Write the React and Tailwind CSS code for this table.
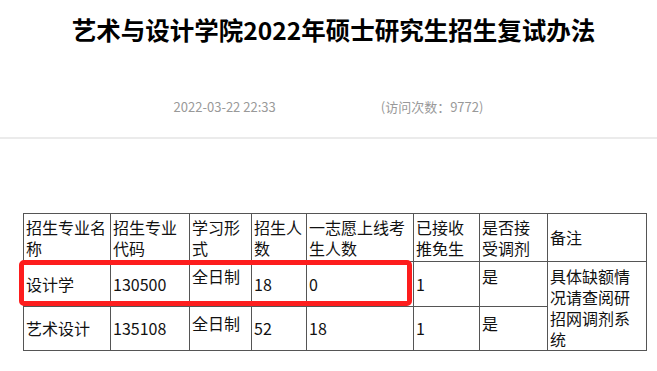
export default function App() {
  const font = { fontFamily: '"Noto Sans CJK SC", "Noto Sans", sans-serif' };
  const cell = "border border-[#555] px-[2px] text-[16px] leading-[21px] text-[#111]";
  return (
    <div className="w-[657px] h-[371px] bg-white overflow-hidden" style={font}>
      <h1 className="pt-[14px] pl-[10px] text-center text-[24.5px] leading-[32px] font-bold text-black">
        艺术与设计学院2022年硕士研究生招生复试办法
      </h1>
      <div className="mt-[51px] flex justify-center gap-[105px] text-[13px] leading-[20px] text-[#999]">
        <span>2022-03-22 22:33</span>
        <span>(访问次数：9772)</span>
      </div>
      <div className="mt-[20px] h-[2px] bg-[#ebebeb]" />
      <div className="relative mt-[74px] ml-[23px]">
        <table className="table-fixed border-collapse w-[623px]">
          <colgroup>
            <col className="w-[87px]" />
            <col className="w-[79px]" />
            <col className="w-[62px]" />
            <col className="w-[55px]" />
            <col className="w-[107px]" />
            <col className="w-[66px]" />
            <col className="w-[68px]" />
            <col className="w-[99px]" />
          </colgroup>
          <tbody>
            <tr>
              <td className={`${cell} align-middle h-[48px]`}>招生专业名称</td>
              <td className={`${cell} align-middle`}>招生专业代码</td>
              <td className={`${cell} align-middle`}>学习形式</td>
              <td className={`${cell} align-middle`}>招生人数</td>
              <td className={`${cell} align-middle`}>一志愿上线考生人数</td>
              <td className={`${cell} align-middle`}>已接收推免生</td>
              <td className={`${cell} align-middle`}>是否接受调剂</td>
              <td className={`${cell} align-middle`}>备注</td>
            </tr>
            <tr>
              <td className={`${cell} align-middle h-[45px]`}>设计学</td>
              <td className={`${cell} align-middle`}>130500</td>
              <td className={`${cell} align-top pt-[4px]`}>全日制</td>
              <td className={`${cell} align-middle`}>18</td>
              <td className={`${cell} align-middle`}>0</td>
              <td className={`${cell} align-middle`}>1</td>
              <td className={`${cell} align-top pt-[4px]`}>是</td>
              <td className={`${cell} align-top pt-[4px]`} rowSpan={2}>
                具体缺额情况请查阅研招网调剂系统
              </td>
            </tr>
            <tr>
              <td className={`${cell} align-middle h-[44px]`}>艺术设计</td>
              <td className={`${cell} align-middle`}>135108</td>
              <td className={`${cell} align-top pt-[6px]`}>全日制</td>
              <td className={`${cell} align-middle`}>52</td>
              <td className={`${cell} align-middle`}>18</td>
              <td className={`${cell} align-middle`}>1</td>
              <td className={`${cell} align-top pt-[6px]`}>是</td>
            </tr>
          </tbody>
        </table>
        <div className="absolute left-[-4px] top-[47px] w-[393px] h-[46px] rounded-[5px] border-[5px] border-[#fd1d1d]" />
      </div>
    </div>
  );
}
